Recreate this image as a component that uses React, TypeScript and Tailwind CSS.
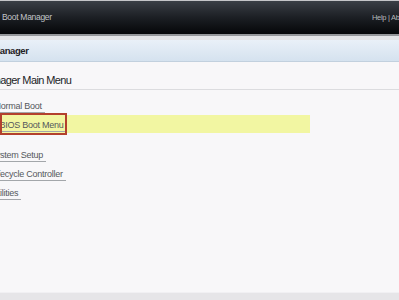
const font = { fontFamily: "'Liberation Sans', Arial, sans-serif" };

type Item = { label: string; shift: string; selected?: boolean };

const topItems: Item[] = [
  { label: 'Normal Boot', shift: '-ml-[5.5px]' },
  { label: 'BIOS Boot Menu', shift: '-ml-[0.5px]', selected: true },
];

const bottomItems: Item[] = [
  { label: 'System Setup', shift: '-ml-[10px]' },
  { label: 'Lifecycle Controller', shift: '-ml-[8.7px]' },
  { label: 'Utilities', shift: '-ml-[8.5px]' },
];

const MenuLink = ({ item }: { item: Item }) => (
  <span
    className={`${item.shift} mt-[3px] inline-block whitespace-nowrap border-b border-[#a3a6aa] pr-[3px] pb-[1px] text-[9px] leading-[10px] tracking-[-0.25px] text-[#55585c]`}
  >
    {item.label}
  </span>
);

export default function App() {
  return (
    <div
      style={font}
      className="flex h-[300px] w-[399px] flex-col overflow-hidden bg-[#f8f7f9]"
    >
      {/* top bar */}
      <div className="h-px bg-[#c4c5c8]" />
      <div className="flex h-[33px] items-center bg-gradient-to-b from-[#3a3f46] via-[#1c1f24] to-[#060709]">
        <span className="pl-[2px] text-[8.5px] tracking-[-0.3px] text-[#c3c6ca]">Boot Manager</span>
        <div className="ml-auto w-[27px] overflow-hidden whitespace-nowrap text-[7.5px] tracking-[-0.3px] text-[#b4b7bb]">
          Help | About | Exit
        </div>
      </div>
      <div className="h-[2px] bg-[#95979b]" />
      <div className="h-[4px] bg-[#e3e4e7]" />

      {/* page title */}
      <div className="flex h-[22px] items-center border-b border-[#c2d0de] bg-gradient-to-b from-[#e9f0f8] to-[#d5e2ef] pt-[2px]">
        <span className="-ml-[30px] whitespace-nowrap text-[9.5px] font-bold tracking-[-0.4px] text-[#1e2124]">
          Boot Manager
        </span>
      </div>

      {/* content */}
      <div className="flex flex-1 flex-col">
        <div className="border-b border-[#dcdcdf] pt-[11px] pb-[2px]">
          <div className="-ml-[42px] whitespace-nowrap text-[11px] leading-[14px] tracking-[-0.6px] text-[#222427]">
            Boot Manager Main Menu
          </div>
        </div>

        <div className="mt-[6px] flex flex-col">
          {topItems.map((item) =>
            item.selected ? (
              <div key={item.label} className="relative flex h-[18px] w-[310px] items-center bg-[#f2f6a2]">
                <MenuLink item={item} />
                <div className="absolute -top-[2px] left-0 h-[22px] w-[67px] border-2 border-[#b3402d]" />
              </div>
            ) : (
              <div key={item.label} className="flex h-[19px] items-center">
                <MenuLink item={item} />
              </div>
            )
          )}
        </div>

        <div className="mt-[12px] flex flex-col">
          {bottomItems.map((item) => (
            <div key={item.label} className="flex h-[19px] items-center">
              <MenuLink item={item} />
            </div>
          ))}
        </div>
      </div>

      {/* bottom strip */}
      <div className="h-px bg-[#f1f0f3]" />
      <div className="h-[7px] bg-[#e6e5e8]" />
    </div>
  );
}
